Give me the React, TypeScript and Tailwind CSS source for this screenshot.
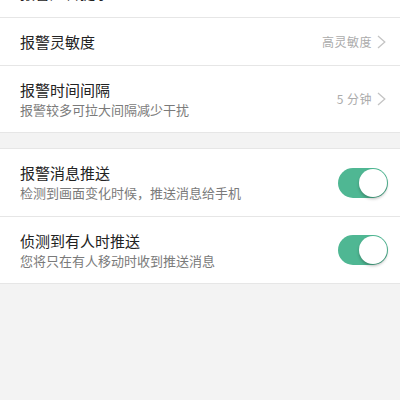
const font = { fontFamily: '"Noto Sans CJK SC", "Noto Sans", sans-serif' };

const Chevron: React.FC = () => (
  <svg width="9" height="14" viewBox="0 0 9 14" className="shrink-0">
    <polyline points="1,1 7.8,7 1,13" fill="none" stroke="#c4c4c4" strokeWidth="1.3" />
  </svg>
);

const Toggle: React.FC = () => (
  <div className="w-[50px] h-[30px] rounded-full bg-[#4fb793] p-[1px] flex justify-end shrink-0">
    <div className="w-[28px] h-[28px] rounded-full bg-white shadow-[0_2px_3px_rgba(0,0,0,0.25)]" />
  </div>
);

type Row = { title: string; sub?: string; value?: string; h: string };

const LinkRow: React.FC<Row> = ({ title, sub, value, h }) => (
  <div className={`flex items-center justify-between pl-5 pr-[14px] border-b border-[#e6e6e6] bg-white ${h}`}>
    <div className="flex flex-col">
      <span className="text-[15px] leading-[20px] text-[#222]">{title}</span>
      {sub && <span className="text-[13px] leading-[18px] mt-[1px] text-[#7a7a7a]">{sub}</span>}
    </div>
    <div className="flex items-center gap-[5px]">
      {value && <span className="text-[12px] text-[#ababab] tracking-[0.5px]">{value}</span>}
      <Chevron />
    </div>
  </div>
);

const SwitchRow: React.FC<Row> = ({ title, sub, h }) => (
  <div className={`flex items-center justify-between pl-5 pr-[12px] border-b border-[#e6e6e6] bg-white ${h}`}>
    <div className="flex flex-col">
      <span className="text-[15px] leading-[20px] text-[#222]">{title}</span>
      <span className="text-[13px] leading-[18px] mt-[1px] text-[#7a7a7a]">{sub}</span>
    </div>
    <Toggle />
  </div>
);

export default function App() {
  return (
    <div className="w-[400px] h-[400px] overflow-hidden bg-[#f3f3f3]" style={font}>
      <div className="-mt-[31px] bg-white">
        <LinkRow title="报警声音提示" h="h-[49px]" />
        <LinkRow title="报警灵敏度" value="高灵敏度" h="h-[48px]" />
        <LinkRow title="报警时间间隔" sub="报警较多可拉大间隔减少干扰" value="5 分钟" h="h-[67px]" />
      </div>
      <div className="h-[15px]" />
      <div className="border-t border-[#e6e6e6] bg-white">
        <SwitchRow title="报警消息推送" sub="检测到画面变化时候，推送消息给手机" h="h-[68px]" />
        <SwitchRow title="侦测到有人时推送" sub="您将只在有人移动时收到推送消息" h="h-[67px]" />
      </div>
    </div>
  );
}
